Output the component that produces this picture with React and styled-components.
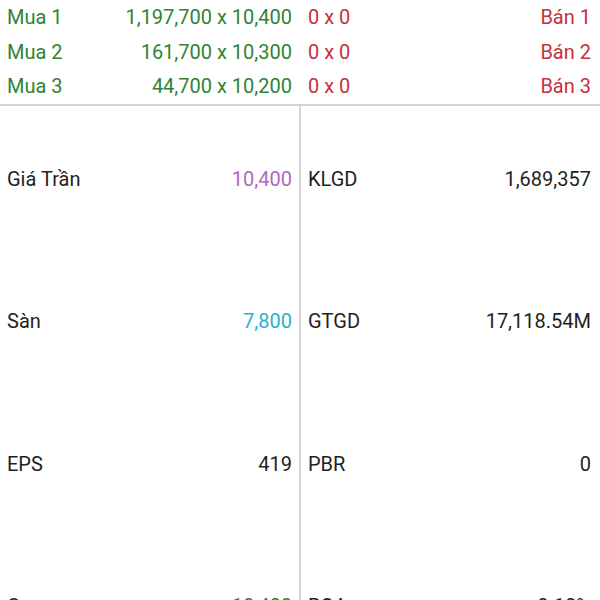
import React from "react";
import styled, { createGlobalStyle } from "styled-components";

const GlobalStyle = createGlobalStyle`
  html, body {
    margin: 0;
    padding: 0;
    background: #ffffff;
    overflow: hidden;
  }
  body {
    font-family: Roboto, "Noto Sans", Arial, sans-serif;
  }
`;

const bids = [
  { label: "Mua 1", bid: "1,197,700 x 10,400", ask: "0 x 0", askLabel: "Bán 1" },
  { label: "Mua 2", bid: "161,700 x 10,300", ask: "0 x 0", askLabel: "Bán 2" },
  { label: "Mua 3", bid: "44,700 x 10,200", ask: "0 x 0", askLabel: "Bán 3" },
];

const stats = [
  { left: "Giá Trần", leftValue: "10,400", tone: "ceil", right: "KLGD", rightValue: "1,689,357" },
  { left: "Sàn", leftValue: "7,800", tone: "floor", right: "GTGD", rightValue: "17,118.54M" },
  { left: "EPS", leftValue: "419", tone: "plain", right: "PBR", rightValue: "0" },
  { left: "Cao", leftValue: "10,400", tone: "up", right: "ROA", rightValue: "0.10%" },
];

const tones = {
  buy: "#2e8434",
  sell: "#c8303a",
  ceil: "#b068c0",
  floor: "#2bb1cc",
  up: "#2e8434",
  plain: "#1f1f1f",
};

const App = () => {
  return (
    <Screen>
      <GlobalStyle />
      <Depth>
        {bids.map((row) => (
          <DepthRow key={row.label}>
            <Half>
              <Text tone="buy">{row.label}</Text>
              <Text tone="buy">{row.bid}</Text>
            </Half>
            <Half right>
              <Text tone="sell">{row.ask}</Text>
              <Text tone="sell">{row.askLabel}</Text>
            </Half>
          </DepthRow>
        ))}
      </Depth>
      <Stats>
        {stats.map((row) => (
          <StatRow key={row.left}>
            <Half>
              <Text tone="plain">{row.left}</Text>
              <Text tone={row.tone}>{row.leftValue}</Text>
            </Half>
            <Divider />
            <Half right>
              <Text tone="plain">{row.right}</Text>
              <Text tone="plain">{row.rightValue}</Text>
            </Half>
          </StatRow>
        ))}
      </Stats>
    </Screen>
  );
};

export default App;

const Screen = styled.div`
  width: 600px;
  height: 600px;
  overflow: hidden;
  background: #ffffff;
`;

const Depth = styled.div`
  display: flex;
  flex-direction: column;
  border-bottom: 2px solid #d4d4d4;
`;

const DepthRow = styled.div`
  display: grid;
  grid-template-columns: 299px 1fr;
  column-gap: 2px;
  height: 34.5px;
  align-items: center;
`;

const Stats = styled.div`
  display: flex;
  flex-direction: column;
  position: relative;
  padding-top: 2px;

  /* the column rule runs through the top padding too */
  &::before {
    content: "";
    position: absolute;
    top: 0;
    left: 299px;
    width: 2px;
    height: 2px;
    background: #d4d4d4;
  }
`;

const StatRow = styled.div`
  display: grid;
  grid-template-columns: 299px 2px 1fr;
  flex: 0 0 142.5px;
  height: 142.5px;
  align-items: center;
`;

const Divider = styled.div`
  align-self: stretch;
  background: #d4d4d4;
`;

const Half = styled.div`
  display: flex;
  justify-content: space-between;
  align-items: center;
  padding: ${(p) => (p.right ? "0 9px 0 7px" : "0 7px 0 7px")};
`;

const Text = styled.span`
  font-size: 20px;
  line-height: 24px;
  color: ${(p) => tones[p.tone]};
  white-space: nowrap;
`;
